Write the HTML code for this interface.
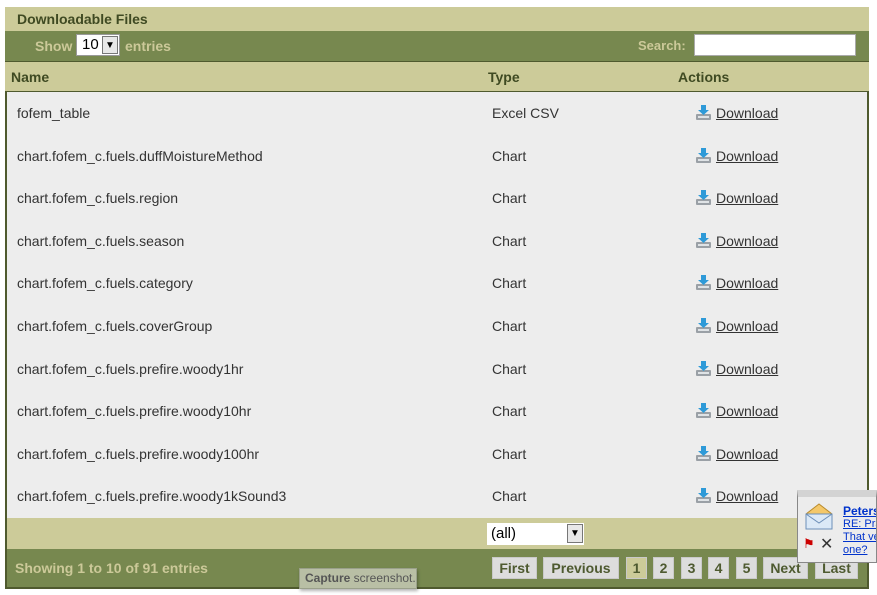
<!DOCTYPE html>
<html><head><meta charset="utf-8"><style>
*{margin:0;padding:0;box-sizing:border-box}
body{width:877px;height:595px;background:#fff;font-family:"Liberation Sans",Arial,sans-serif;position:relative;overflow:hidden}
.a{position:absolute}
.tan{background:#cccb99}
.grn{background:#77884f}
.b{font-weight:bold}
.row{left:7px;width:860px;height:42.6px;background:#ededed;font-size:14px;color:#333}
.row span{position:absolute;top:13px}
.dl{left:709px;top:13px;color:#333;text-decoration:underline}
.ic{position:absolute;left:-21px;top:-1px}
.pb{top:557px;height:22px;background:#ddd;border:1px solid #c9c9c9;font-weight:bold;font-size:14px;color:#4e5a30;line-height:20px;text-align:center}
</style></head><body>
<div class="a tan" style="left:5px;top:7px;width:864px;height:24px"></div>
<div class="a b" style="left:17px;top:11px;font-size:14px;color:#3f4a22">Downloadable Files</div>
<div class="a grn" style="left:5px;top:31px;width:864px;height:30px"></div>
<div class="a b" style="left:35px;top:38px;font-size:14px;color:#ccc999">Show</div>
<div class="a" style="left:76px;top:34px;width:44px;height:22px;background:#fff;border:1px solid #999;font-size:15px;padding-left:5px;line-height:20px;color:#000">10</div>
<div class="a" style="left:102px;top:36px;width:16px;height:18px;background:#e8e8e8;border:1px solid #777;font-size:10px;text-align:center;line-height:17px">▼</div>
<div class="a b" style="left:125px;top:38px;font-size:14px;color:#ccc999">entries</div>
<div class="a b" style="left:638px;top:38px;font-size:13px;color:#ccc999">Search:</div>
<div class="a" style="left:694px;top:34px;width:162px;height:22px;background:#fff;border:1px solid #aaa"></div>
<div class="a tan" style="left:5px;top:61px;width:864px;height:31px;border-top:1px solid #4f5a2e;border-bottom:1px solid #4f5a2e"></div>
<div class="a b" style="left:11px;top:69px;font-size:14px;color:#3f4a22">Name</div>
<div class="a b" style="left:488px;top:69px;font-size:14px;color:#3f4a22">Type</div>
<div class="a b" style="left:678px;top:69px;font-size:14px;color:#3f4a22">Actions</div>
<div class="a" style="left:5px;top:92px;width:864px;height:426px;background:#ededed;border-left:2px solid #4f5a2e;border-right:2px solid #4f5a2e;border-bottom:1px solid #4f5a2e"></div>

<div class="a row" style="top:92px"><span style="left:10px">fofem_table</span><span style="left:485px">Excel CSV</span><span class="dl"><svg class="ic" width="17" height="17" viewBox="0 0 17 17"><rect x="1" y="10" width="15" height="6" rx="1" fill="#9aa0a6"/><rect x="3" y="12" width="11" height="2" fill="#dfe3e6"/><path d="M6 1h5v5h3l-5.5 5L3 6h3z" fill="#2e9ad8"/></svg>Download</span></div>
<div class="a row" style="top:134.6px"><span style="left:10px">chart.fofem_c.fuels.duffMoistureMethod</span><span style="left:485px">Chart</span><span class="dl"><svg class="ic" width="17" height="17" viewBox="0 0 17 17"><rect x="1" y="10" width="15" height="6" rx="1" fill="#9aa0a6"/><rect x="3" y="12" width="11" height="2" fill="#dfe3e6"/><path d="M6 1h5v5h3l-5.5 5L3 6h3z" fill="#2e9ad8"/></svg>Download</span></div>
<div class="a row" style="top:177.2px"><span style="left:10px">chart.fofem_c.fuels.region</span><span style="left:485px">Chart</span><span class="dl"><svg class="ic" width="17" height="17" viewBox="0 0 17 17"><rect x="1" y="10" width="15" height="6" rx="1" fill="#9aa0a6"/><rect x="3" y="12" width="11" height="2" fill="#dfe3e6"/><path d="M6 1h5v5h3l-5.5 5L3 6h3z" fill="#2e9ad8"/></svg>Download</span></div>
<div class="a row" style="top:219.8px"><span style="left:10px">chart.fofem_c.fuels.season</span><span style="left:485px">Chart</span><span class="dl"><svg class="ic" width="17" height="17" viewBox="0 0 17 17"><rect x="1" y="10" width="15" height="6" rx="1" fill="#9aa0a6"/><rect x="3" y="12" width="11" height="2" fill="#dfe3e6"/><path d="M6 1h5v5h3l-5.5 5L3 6h3z" fill="#2e9ad8"/></svg>Download</span></div>
<div class="a row" style="top:262.4px"><span style="left:10px">chart.fofem_c.fuels.category</span><span style="left:485px">Chart</span><span class="dl"><svg class="ic" width="17" height="17" viewBox="0 0 17 17"><rect x="1" y="10" width="15" height="6" rx="1" fill="#9aa0a6"/><rect x="3" y="12" width="11" height="2" fill="#dfe3e6"/><path d="M6 1h5v5h3l-5.5 5L3 6h3z" fill="#2e9ad8"/></svg>Download</span></div>
<div class="a row" style="top:305px"><span style="left:10px">chart.fofem_c.fuels.coverGroup</span><span style="left:485px">Chart</span><span class="dl"><svg class="ic" width="17" height="17" viewBox="0 0 17 17"><rect x="1" y="10" width="15" height="6" rx="1" fill="#9aa0a6"/><rect x="3" y="12" width="11" height="2" fill="#dfe3e6"/><path d="M6 1h5v5h3l-5.5 5L3 6h3z" fill="#2e9ad8"/></svg>Download</span></div>
<div class="a row" style="top:347.6px"><span style="left:10px">chart.fofem_c.fuels.prefire.woody1hr</span><span style="left:485px">Chart</span><span class="dl"><svg class="ic" width="17" height="17" viewBox="0 0 17 17"><rect x="1" y="10" width="15" height="6" rx="1" fill="#9aa0a6"/><rect x="3" y="12" width="11" height="2" fill="#dfe3e6"/><path d="M6 1h5v5h3l-5.5 5L3 6h3z" fill="#2e9ad8"/></svg>Download</span></div>
<div class="a row" style="top:390.2px"><span style="left:10px">chart.fofem_c.fuels.prefire.woody10hr</span><span style="left:485px">Chart</span><span class="dl"><svg class="ic" width="17" height="17" viewBox="0 0 17 17"><rect x="1" y="10" width="15" height="6" rx="1" fill="#9aa0a6"/><rect x="3" y="12" width="11" height="2" fill="#dfe3e6"/><path d="M6 1h5v5h3l-5.5 5L3 6h3z" fill="#2e9ad8"/></svg>Download</span></div>
<div class="a row" style="top:432.8px"><span style="left:10px">chart.fofem_c.fuels.prefire.woody100hr</span><span style="left:485px">Chart</span><span class="dl"><svg class="ic" width="17" height="17" viewBox="0 0 17 17"><rect x="1" y="10" width="15" height="6" rx="1" fill="#9aa0a6"/><rect x="3" y="12" width="11" height="2" fill="#dfe3e6"/><path d="M6 1h5v5h3l-5.5 5L3 6h3z" fill="#2e9ad8"/></svg>Download</span></div>
<div class="a row" style="top:475.4px"><span style="left:10px">chart.fofem_c.fuels.prefire.woody1kSound3</span><span style="left:485px">Chart</span><span class="dl"><svg class="ic" width="17" height="17" viewBox="0 0 17 17"><rect x="1" y="10" width="15" height="6" rx="1" fill="#9aa0a6"/><rect x="3" y="12" width="11" height="2" fill="#dfe3e6"/><path d="M6 1h5v5h3l-5.5 5L3 6h3z" fill="#2e9ad8"/></svg>Download</span></div>

<div class="a tan" style="left:5px;top:518px;width:864px;height:31px;border-left:2px solid #4f5a2e;border-right:2px solid #4f5a2e"></div>
<div class="a" style="left:487px;top:523px;width:97px;height:22px;background:#fff;font-size:15px;line-height:22px;padding-left:4px;color:#000">(all)</div>
<div class="a" style="left:567px;top:524px;width:16px;height:19px;background:#e8e8e8;border:1px solid #777;font-size:10px;text-align:center;line-height:18px">▼</div>
<div class="a grn" style="left:5px;top:549px;width:864px;height:40px;border:2px solid #4f5a2e;border-top:none"></div>
<div class="a b" style="left:15px;top:560px;font-size:14px;color:#ccc999">Showing 1 to 10 of 91 entries</div>
<div class="a pb" style="left:492px;width:45px">First</div>
<div class="a pb" style="left:543px;width:76px">Previous</div>
<div class="a pb" style="left:626px;width:21px;background:#cccb99">1</div>
<div class="a pb" style="left:653px;width:21px">2</div>
<div class="a pb" style="left:681px;width:21px">3</div>
<div class="a pb" style="left:708px;width:21px">4</div>
<div class="a pb" style="left:736px;width:21px">5</div>
<div class="a pb" style="left:763px;width:45px">Next</div>
<div class="a pb" style="left:815px;width:43px">Last</div>
<div class="a" style="left:299px;top:568px;width:118px;height:21px;background:#b9bfa5;border:1px solid #9aa08a;box-shadow:1px 2px 3px rgba(0,0,0,.3);font-size:12px;color:#555;line-height:19px;padding-left:5px;white-space:nowrap"><b>Capture</b> screenshot.</div>
<div class="a" style="left:797px;top:490px;width:80px;height:73px;background:#ececec;border:1px solid #888;border-top:7px solid #d3d3d3;overflow:hidden;white-space:nowrap">
<svg class="a" style="left:6px;top:6px" width="30" height="28" viewBox="0 0 30 28"><path d="M2 11L15 1l13 10v15H2z" fill="#f4c86a" stroke="#b98b2c"/><rect x="2" y="11" width="26" height="15" fill="#dbe9f7" stroke="#6d8fb8"/><path d="M2 11l13 9 13-9" fill="none" stroke="#6d8fb8"/></svg>
<div class="a" style="left:5px;top:39px;color:#c00;font-size:13px">⚑</div>
<div class="a" style="left:22px;top:37px;color:#333;font-size:16px">✕</div>
<div class="a b" style="left:45px;top:7px;font-size:12px;color:#03c;text-decoration:underline">Peters</div>
<div class="a" style="left:45px;top:21px;font-size:11px;color:#03c;text-decoration:underline;line-height:13px">RE: Pra<br>That ve<br>one?</div>
</div>
</body></html>
